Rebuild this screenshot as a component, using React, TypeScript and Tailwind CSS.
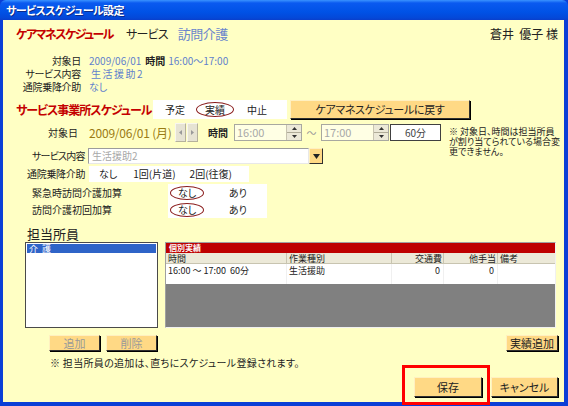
import React from 'react';

const font = "font-['Noto_Sans_CJK_JP',sans-serif] [font-feature-settings:'palt']";

const GoldButton: React.FC<{ className?: string; children: React.ReactNode }> = ({ className = '', children }) => (
    <div
        className={`shrink-0 flex items-center justify-center bg-[#FFD985] border border-t-[#FFF0C0] border-l-[#FFF0C0] border-r-[#303030] border-b-[#303030] shadow-[1px_1px_0_#000] text-[11px] leading-none ${className}`}
    >
        {children}
    </div>
);

const Circled: React.FC<{ children: React.ReactNode; className?: string }> = ({ children, className = '' }) => (
    <span className={`shrink-0 flex items-center justify-center rounded-[50%] border-[1.5px] border-[#8A1C1C] ${className}`}>{children}</span>
);

const Spinner: React.FC = () => (
    <div className="shrink-0 flex flex-col w-[15px] h-full border-l border-[#C8C4B0]">
        <div className="flex-1 flex items-center justify-center bg-[#ECE9D8] border-b border-[#B0AC98]">
            <svg width="5" height="3" viewBox="0 0 5 3"><path d="M2.5 0L5 3H0z" fill="#333" /></svg>
        </div>
        <div className="flex-1 flex items-center justify-center bg-[#ECE9D8]">
            <svg width="5" height="3" viewBox="0 0 5 3"><path d="M0 0h5L2.5 3z" fill="#333" /></svg>
        </div>
    </div>
);

const App: React.FC = () => {
    return (
        <div className={`w-[568px] h-[406px] flex flex-col bg-[#0A3FD6] ${font} text-[#222] whitespace-nowrap overflow-hidden`}>
            {/* title bar */}
            <div className="h-[20px] shrink-0 flex items-center pl-[6px] bg-[linear-gradient(to_bottom,#3A93FF_0%,#0A5AF0_15%,#0052E6_60%,#0448D8_90%,#0A3FCB_100%)] rounded-t-[6px]">
                <span className="text-white text-[11px] font-bold leading-none tracking-[-0.6px] [text-shadow:1px_1px_0_#0A2A8A]">サービススケジュール設定</span>
            </div>

            {/* body */}
            <div className="flex-1 flex flex-col ml-[3px] mr-[4px] mb-[4px] bg-[#FFFFC4] relative">
                {/* heading */}
                <div className="mt-[5px] h-[17px] flex items-center pl-[13px] pr-[6px]">
                    <span className="w-[96px] shrink-0 text-[12px] font-bold text-[#C40000] leading-none tracking-[-1.6px]">ケアマネスケジュール</span>
                    <span className="ml-[14px] text-[12px] leading-none tracking-[-0.8px]">サービス</span>
                    <span className="ml-[10px] text-[13px] leading-none text-[#6A86CC] tracking-[-0.5px]">訪問介護</span>
                    <span className="ml-auto text-[12px] leading-none">蒼井&nbsp;&nbsp;優子 様</span>
                </div>

                {/* care manager info */}
                <div className="mt-[12px] flex flex-col text-[10px] leading-none">
                    <div className="flex h-[13px] items-center">
                        <span className="w-[78px] shrink-0 text-right tracking-[-0.3px]">対象日</span>
                        <span className="ml-[8px] text-[#5F7FCC]">2009/06/01</span>
                        <span className="ml-[4px] font-bold">時間</span>
                        <span className="ml-[3px] text-[#5F7FCC]">16:00～17:00</span>
                    </div>
                    <div className="flex h-[13px] items-center">
                        <span className="w-[78px] shrink-0 text-right tracking-[-0.3px]">サービス内容</span>
                        <span className="ml-[10px] text-[#5F7FCC] tracking-[1.5px]">生活援助2</span>
                    </div>
                    <div className="flex h-[13px] items-center">
                        <span className="w-[78px] shrink-0 text-right tracking-[-0.3px]">通院乗降介助</span>
                        <span className="ml-[8px] text-[#5F7FCC]">なし</span>
                    </div>
                </div>

                {/* office schedule header */}
                <div className="mt-[7px] h-[19px] flex items-center pl-[13px]">
                    <span className="w-[137px] shrink-0 text-[12px] font-bold text-[#C40000] leading-none tracking-[-1px]">サービス事業所スケジュール</span>
                    <div className="shrink-0 w-[134px] h-[19px] bg-white flex items-center text-[10px] leading-none">
                        <span className="ml-[12px]">予定</span>
                        <Circled className="ml-[11px] w-[38px] h-[15px]">実績</Circled>
                        <span className="ml-[13px]">中止</span>
                    </div>
                    <GoldButton className="ml-[3px] w-[180px] h-[19px] text-[10px] tracking-[-0.3px]">ケアマネスケジュールに戻す</GoldButton>
                </div>

                {/* date row */}
                <div className="mt-[4px] h-[19px] flex items-start pl-[45px] text-[10px]">
                    <span className="h-[19px] flex items-center leading-none">対象日</span>
                    <span className="ml-[11px] w-[86px] shrink-0 h-[19px] flex items-center text-[12px] leading-none text-[#9A7B14] tracking-[-0.2px]">2009/06/01 (月)</span>
                    <div className="shrink-0 h-[19px] flex">
                        <div className="w-[11px] h-full bg-[#E6E3D3] border border-[#F8F6EE] border-r-[#B5B19C] border-b-[#B5B19C] flex items-center justify-center">
                            <svg width="3" height="5" viewBox="0 0 3 5"><path d="M3 0v5L0 2.5z" fill="#999" /></svg>
                        </div>
                        <div className="ml-[1px] w-[11px] h-full bg-[#E6E3D3] border border-[#F8F6EE] border-r-[#B5B19C] border-b-[#B5B19C] flex items-center justify-center">
                            <svg width="3" height="5" viewBox="0 0 3 5"><path d="M0 0v5L3 2.5z" fill="#999" /></svg>
                        </div>
                    </div>
                    <span className="ml-[10px] w-[26px] shrink-0 h-[19px] flex items-center font-bold leading-none">時間</span>
                    <div className="mt-[1px] w-[68px] shrink-0 h-[17px] flex bg-[#FFFFE4] border border-[#A8A8A0]">
                        <span className="flex-1 flex items-center pl-[2px] text-[11px] leading-none text-[#A8A8A8]">16:00</span>
                        <Spinner />
                    </div>
                    <span className="w-[19px] shrink-0 h-[19px] flex items-center justify-center text-[#999] leading-none">～</span>
                    <div className="mt-[1px] w-[68px] shrink-0 h-[17px] flex bg-[#FFFFE4] border border-[#A8A8A0]">
                        <span className="flex-1 flex items-center pl-[2px] text-[11px] leading-none text-[#A8A8A8]">17:00</span>
                        <Spinner />
                    </div>
                    <div className="ml-[1px] mt-[1px] w-[51px] shrink-0 h-[17px] flex items-center justify-center bg-white border border-[#404040] leading-none text-[#444]">60分</div>
                    <p className="ml-[8px] mt-[4px] w-[112px] shrink-0 whitespace-normal text-[9px] leading-[10px] text-[#222]">※ 対象日、時間は担当所員が割り当てられている場合変更できません。</p>
                </div>

                {/* service content */}
                <div className="mt-[6px] h-[16px] flex items-center pl-[29px] text-[10px]">
                    <span className="w-[56px] shrink-0 leading-none tracking-[-0.8px]">サービス内容</span>
                    <div className="w-[221px] shrink-0 h-[16px] flex items-center pl-[3px] bg-white border border-[#9C9C9C] border-b-[#E8E8E8] border-r-[#E8E8E8] text-[#A8A8A8] leading-none">生活援助2</div>
                    <div className="w-[14px] shrink-0 h-[16px] flex items-center justify-center bg-[#FFD985] border border-t-[#FFF0C0] border-l-[#FFF0C0] border-r-[#303030] border-b-[#303030]">
                        <svg width="7" height="5" viewBox="0 0 7 5"><path d="M0 0h7L3.5 5z" fill="#222" /></svg>
                    </div>
                </div>

                {/* tsuin */}
                <div className="mt-[2px] h-[16px] flex items-center pl-[24px] text-[10px]">
                    <span className="w-[62px] shrink-0 leading-none tracking-[-0.3px]">通院乗降介助</span>
                    <div className="w-[160px] shrink-0 h-[16px] bg-white flex items-center leading-none">
                        <span className="ml-[10px]">なし</span>
                        <span className="ml-[16px]">1回(片道)</span>
                        <span className="ml-[14px]">2回(往復)</span>
                    </div>
                </div>

                {/* kasan */}
                <div className="mt-[2px] h-[34px] flex pl-[29px] text-[10px]">
                    <div className="w-[136px] shrink-0 flex flex-col">
                        <span className="h-[17px] flex items-center leading-none">緊急時訪問介護加算</span>
                        <span className="h-[17px] flex items-center leading-none">訪問介護初回加算</span>
                    </div>
                    <div className="w-[99px] shrink-0 bg-white flex flex-col">
                        <div className="h-[17px] flex items-center leading-none">
                            <Circled className="ml-[2px] w-[34px] h-[14px]">なし</Circled>
                            <span className="ml-[25px]">あり</span>
                        </div>
                        <div className="h-[17px] flex items-center leading-none">
                            <Circled className="ml-[2px] w-[34px] h-[14px]">なし</Circled>
                            <span className="ml-[25px]">あり</span>
                        </div>
                    </div>
                </div>

                {/* staff label */}
                <div className="mt-[7px] h-[17px] flex items-center pl-[24px]">
                    <span className="text-[13px] leading-none">担当所員</span>
                </div>

                {/* list + grid */}
                <div className="h-[86px] flex pl-[22px]">
                    <div className="w-[133px] shrink-0 h-full bg-white border border-[#4A4A4A] p-px">
                        <div className="h-[9px] bg-[#2F64C8] text-white text-[9px] leading-[9px] pl-[2px]">介&nbsp;&nbsp;護</div>
                    </div>
                    <div className="ml-[7px] w-[391px] shrink-0 h-full flex flex-col border border-[#A0A0A0] border-r-[#F0F0F0] border-b-[#F0F0F0] bg-[#808080] text-[9px]">
                        <div className="h-[10px] shrink-0 flex items-center bg-[#BE0000] text-white font-bold text-[8px] leading-none pl-[3px]">個別実績</div>
                        <div className="h-[11px] shrink-0 flex bg-[#ECE9D8] border-b border-[#C8C4B0] leading-[11px]">
                            <span className="w-[121px] shrink-0 pl-[2px] border-r border-[#C8C4B0]">時間</span>
                            <span className="w-[105px] shrink-0 pl-[2px] border-r border-[#C8C4B0]">作業種別</span>
                            <span className="w-[52px] shrink-0 pr-[1px] text-right border-r border-[#C8C4B0]">交通費</span>
                            <span className="w-[54px] shrink-0 pr-[1px] text-right border-r border-[#C8C4B0]">他手当</span>
                            <span className="flex-1 pl-[2px]">備考</span>
                        </div>
                        <div className="h-[20px] shrink-0 flex bg-white leading-[14px]">
                            <span className="w-[121px] shrink-0 pl-[2px] border-r border-[#F0F0F0]">16:00 ～ 17:00&nbsp;&nbsp;60分</span>
                            <span className="w-[105px] shrink-0 pl-[2px] border-r border-[#F0F0F0]">生活援助</span>
                            <span className="w-[52px] shrink-0 pr-[3px] text-right border-r border-[#F0F0F0]">0</span>
                            <span className="w-[54px] shrink-0 pr-[3px] text-right border-r border-[#F0F0F0]">0</span>
                            <span className="flex-1"></span>
                        </div>
                    </div>
                </div>

                {/* add / delete buttons */}
                <div className="mt-[7px] h-[16px] flex items-center pl-[46px]">
                    <GoldButton className="w-[51px] h-[16px] text-[10px] text-[#999]">追加</GoldButton>
                    <GoldButton className="ml-[6px] w-[51px] h-[16px] text-[10px] text-[#999]">削除</GoldButton>
                    <GoldButton className="ml-auto mr-[6px] w-[52px] h-[16px] text-[10px]">実績追加</GoldButton>
                </div>

                {/* note */}
                <div className="mt-[6px] h-[12px] flex items-center pl-[47px]">
                    <span className="text-[10px] leading-none tracking-[0.3px]">※ 担当所員の追加は、直ちにスケジュール登録されます。</span>
                </div>

                {/* save / cancel */}
                <div className="mt-[8px] h-[20px] flex items-center justify-end pr-[6px]">
                    <div className="relative">
                        <GoldButton className="w-[68px] h-[20px] text-[10px]">保存</GoldButton>
                        <div className="absolute left-[-12px] top-[-12px] w-[88px] h-[40px] border-[3px] border-[#FF0000] pointer-events-none" />
                    </div>
                    <GoldButton className="ml-[9px] w-[67px] h-[20px] text-[10px]">キャンセル</GoldButton>
                </div>
            </div>
        </div>
    );
};

export default App;
